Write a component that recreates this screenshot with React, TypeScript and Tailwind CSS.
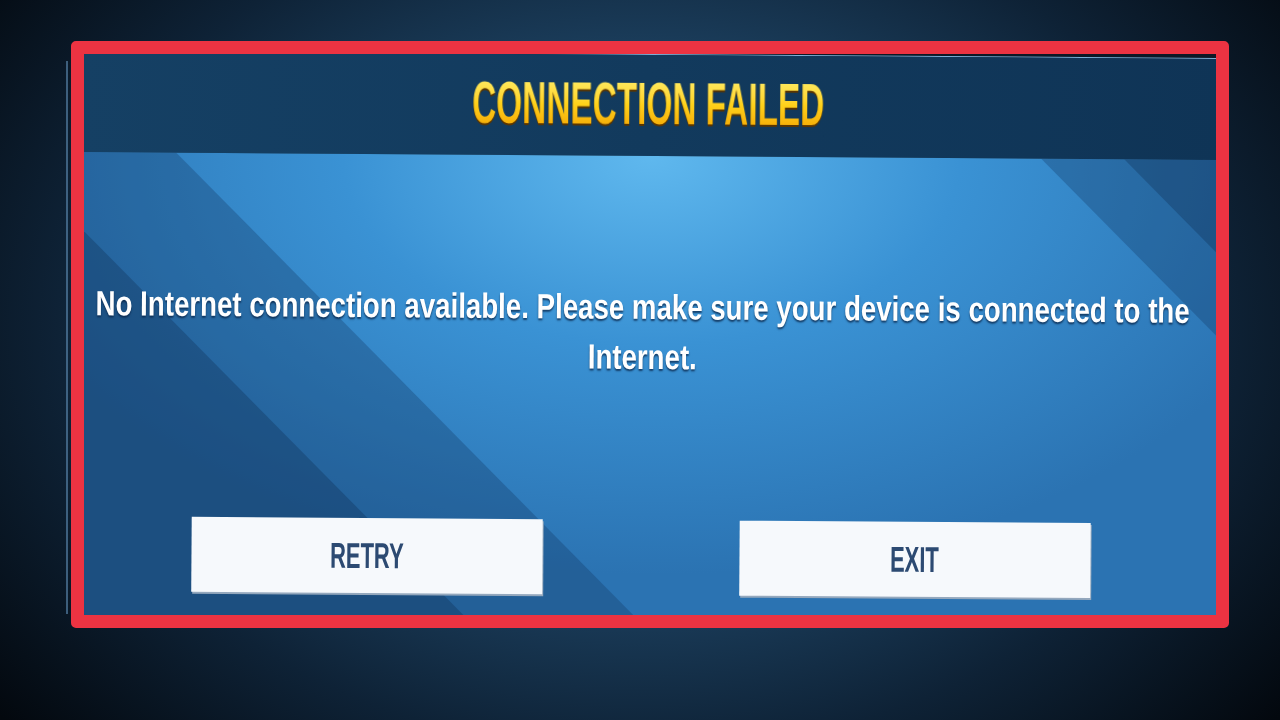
// Connection failed dialog, game-style
const FONT = "font-['Liberation_Sans',Arial,sans-serif]";

const GameButton = ({ label }: { label: string }) => (
  <div className="w-[351px] h-[75px] bg-[#f6f9fc] flex items-center justify-center shadow-[1px_2px_0_#94a8bd]">
    <span className={`${FONT} text-[36px] leading-none font-bold text-[#2c4a72] scale-x-[0.61] whitespace-nowrap`}>
      {label}
    </span>
  </div>
);

export default function App() {
  return (
    <div className="w-[1280px] h-[720px] overflow-hidden pt-[41px] pl-[71px] bg-[radial-gradient(ellipse_65%_85%_at_50%_45%,#2a5a85_0%,#1d4262_40%,#0e2236_70%,#03080e_100%)]">
      <div className="relative w-[1158px]">
        {/* dialog edge peeking out on the left */}
        <div className="absolute left-[-5px] top-[20px] bottom-[14px] w-[2px] bg-[#5f8db5]/60" />

        {/* red highlight frame */}
        <div className="relative w-[1158px] h-[587px] rounded-[5px] border-[13px] border-[#ec3342] bg-[#0b1826] overflow-hidden">
          <div className="flex w-full h-full">
            <div className="shrink-0 -ml-[6px] w-[1144px] h-[567px] rotate-[0.4deg] flex flex-col border-t border-[#7fb0d8]">
              {/* Header */}
              <div className="h-[101px] shrink-0 flex items-center justify-center pb-[3px] pr-[6px] bg-linear-to-r from-[#154064] to-[#0f3456]">
                <h1
                  className={`${FONT} text-[60px] leading-none font-bold scale-x-[0.556] whitespace-nowrap bg-linear-to-b from-[#fff06a] via-[#ffd21a] to-[#f0a000] bg-clip-text text-transparent drop-shadow-[0_2px_0_#5a3500]`}
                >
                  CONNECTION FAILED
                </h1>
              </div>

              {/* Body */}
              <div className="relative flex-1 bg-[radial-gradient(ellipse_60%_90%_at_50%_0%,#5fb8ee_0%,#3a92d4_45%,#2b73b2_100%)]">
                <svg
                  className="absolute inset-0 w-full h-full"
                  viewBox="0 0 1144 466"
                  preserveAspectRatio="none"
                >
                  <polygon points="0,0 97,0 563,466 0,466" fill="rgba(18,55,100,0.32)" />
                  <polygon points="0,74 392,466 0,466" fill="rgba(10,35,70,0.28)" />
                  <polygon points="962,0 1144,0 1144,182" fill="rgba(18,55,100,0.32)" />
                  <polygon points="1045,0 1144,0 1144,99" fill="rgba(10,35,70,0.28)" />
                </svg>

                <div className="relative flex flex-col">
                  <div className="mt-[126px] flex flex-col items-center pr-[16px]">
                    <div
                      className={`${FONT} scale-x-[0.79] text-white font-bold text-[35px] leading-[50px] whitespace-nowrap text-center [text-shadow:0_2px_2px_rgba(8,35,70,0.75)]`}
                    >
                      <div>No Internet connection available. Please make sure your device is connected to the</div>
                      <div>Internet.</div>
                    </div>
                  </div>

                  <div className="mt-[138px] flex pl-[115px] gap-[197px]">
                    <GameButton label="RETRY" />
                    <GameButton label="EXIT" />
                  </div>
                </div>
              </div>
            </div>
          </div>
        </div>
      </div>
    </div>
  );
}
